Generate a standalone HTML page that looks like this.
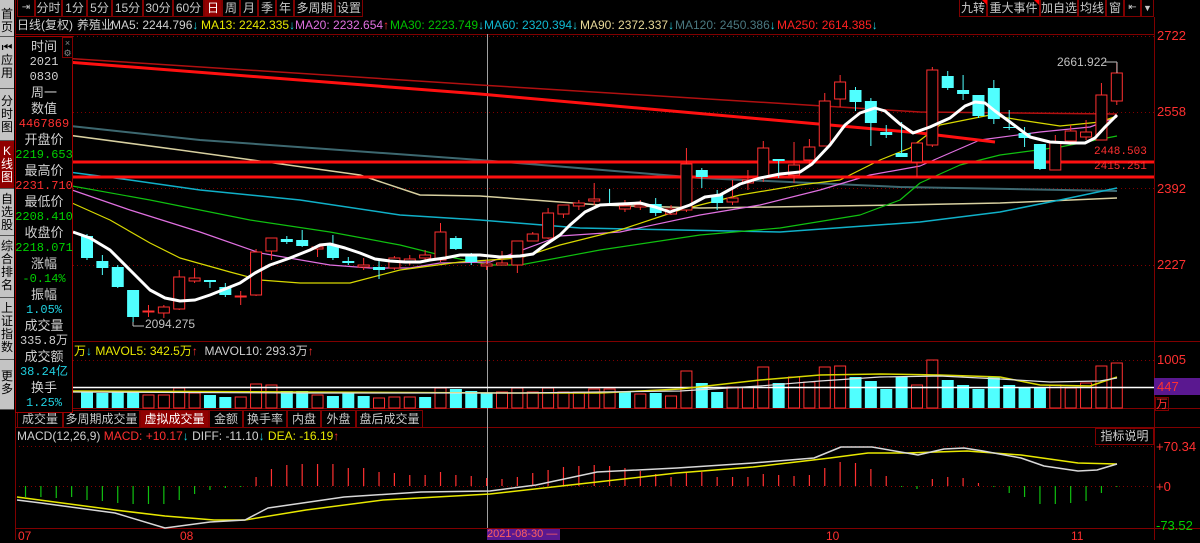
<!DOCTYPE html>
<html><head><meta charset="utf-8">
<style>
*{margin:0;padding:0;box-sizing:border-box}
body{width:1200px;height:540px;background:#000;overflow:hidden;position:relative;font-family:"Liberation Sans","Noto Sans CJK SC",sans-serif;font-size:12px;color:#c0c0c0}
.a{position:absolute;white-space:nowrap}
.btn{position:absolute;top:0;height:17px;border:1px solid #800000;border-top:none;line-height:16px;text-align:center;color:#c8c8c8;font-size:12px}
.side{position:absolute;left:0;width:14px;background:#c4c4c4;color:#000;font-size:12px;line-height:13px;text-align:center;border-bottom:1px solid #555}
.tab{position:absolute;top:410px;height:18px;border:1px solid #800000;line-height:16px;text-align:center;color:#c8c8c8;font-size:12px}
.ib{position:absolute;left:15px;width:58px;text-align:center;font-size:13px;line-height:15px}
.v{font-family:"Liberation Mono",monospace;font-size:12px}
.r{color:#ff3030}.g{color:#00d000}.c{color:#20d0e0}.w{color:#d0d0d0}.y{color:#e8e800}
.ma{position:absolute;top:18px;line-height:15px;font-size:12px;white-space:nowrap}
</style></head><body>
<svg id="s" width="1200" height="540" style="position:absolute;left:0;top:0"></svg>

<div class="side" style="top:0;height:37px;padding-top:8px">首<br>页</div>
<div class="side" style="top:37px;height:52px;padding-top:4px">⏮<br>应<br>用</div>
<div class="side" style="top:89px;height:52px;padding-top:6px">分<br>时<br>图</div>
<div class="side" style="top:141px;height:48px;padding-top:4px;background:#900000;color:#fff">K<br>线<br>图</div>
<div class="side" style="top:189px;height:47px;padding-top:4px">自<br>选<br>股</div>
<div class="side" style="top:236px;height:62px;padding-top:4px">综<br>合<br>排<br>名</div>
<div class="side" style="top:298px;height:62px;padding-top:4px">上<br>证<br>指<br>数</div>
<div class="side" style="top:360px;height:50px;padding-top:10px">更<br>多</div>

<div class="btn" style="left:17px;width:18px;font-size:10px">⇥</div>
<div class="btn" style="left:35px;width:27px">分时</div>
<div class="btn" style="left:62px;width:25px">1分</div>
<div class="btn" style="left:87px;width:25px">5分</div>
<div class="btn" style="left:112px;width:31px">15分</div>
<div class="btn" style="left:143px;width:30px">30分</div>
<div class="btn" style="left:173px;width:31px">60分</div>
<div class="btn" style="left:204px;width:18px;background:#900000;color:#fff">日</div>
<div class="btn" style="left:222px;width:18px">周</div>
<div class="btn" style="left:240px;width:18px">月</div>
<div class="btn" style="left:258px;width:18px">季</div>
<div class="btn" style="left:276px;width:18px">年</div>
<div class="btn" style="left:294px;width:41px">多周期</div>
<div class="btn" style="left:335px;width:28px">设置</div>
<div class="btn" style="left:959px;width:28px">九转</div>
<div class="btn" style="left:987px;width:53px">重大事件</div>
<div class="btn" style="left:1040px;width:38px">加自选</div>
<div class="btn" style="left:1078px;width:28px">均线</div>
<div class="btn" style="left:1106px;width:18px">窗</div>
<div class="btn" style="left:1124px;width:17px;font-size:10px">⇤</div>
<div class="btn" style="left:1141px;width:13px;font-size:9px">▼</div>
<div class="a" style="left:982px;top:0;width:0;height:0;border-left:5px solid transparent;border-top:5px solid #f00"></div>
<div class="a" style="left:1034px;top:0;width:0;height:0;border-left:5px solid transparent;border-top:5px solid #f00"></div>

<div class="ma w" style="left:17px">日线(复权)</div>
<div class="ma w" style="left:77px">养殖业</div>
<div class="ma w" style="left:111px">MA5: 2244.796<span class="c">↓</span></div>
<div class="ma y" style="left:201px">MA13: 2242.335<span class="c">↓</span></div>
<div class="ma" style="left:295px;color:#e070e0">MA20: 2232.654<span class="r">↑</span></div>
<div class="ma" style="left:390px;color:#00c000">MA30: 2223.749<span class="c">↓</span></div>
<div class="ma" style="left:484px;color:#10b8d0">MA60: 2320.394<span class="c">↓</span></div>
<div class="ma" style="left:580px;color:#e8d898">MA90: 2372.337<span class="c">↓</span></div>
<div class="ma" style="left:675px;color:#4a7880">MA120: 2450.386<span class="c">↓</span></div>
<div class="ma" style="left:777px;color:#ff2020">MA250: 2614.385<span class="c">↓</span></div>

<div class="a r" style="left:1157px;top:28px;font-size:13px">2722</div>
<div class="a r" style="left:1157px;top:104px;font-size:13px">2558</div>
<div class="a r" style="left:1157px;top:181px;font-size:13px">2392</div>
<div class="a r" style="left:1157px;top:257px;font-size:13px">2227</div>
<div class="a r v" style="left:1094px;top:146px;font-size:11px">2448.503</div>
<div class="a r v" style="left:1094px;top:161px;font-size:11px">2415.251</div>
<div class="a w" style="left:1057px;top:55px;color:#c0c0c0">2661.922</div>
<div class="a w" style="left:145px;top:317px;color:#c0c0c0">2094.275</div>

<div class="a" style="left:74px;top:344px;line-height:14px"><span class="y">万</span><span class="c">↓</span> <span class="y">MAVOL5: 342.5万</span><span class="r">↑</span> &nbsp;<span class="w">MAVOL10: 293.3万</span><span class="r">↑</span></div>
<div class="a r" style="left:1157px;top:352px;font-size:13px">1005</div>
<div class="a" style="left:1154px;top:378px;width:46px;height:17px;background:#5a1890"></div>
<div class="a r" style="left:1157px;top:379px;font-size:13px">447</div>
<div class="a r" style="left:1155px;top:397px;font-size:12px;border:1px solid #800000;width:14px;height:14px;line-height:12px;text-align:center">万</div>

<div class="tab" style="left:17px;width:46px">成交量</div>
<div class="tab" style="left:63px;width:77px">多周期成交量</div>
<div class="tab" style="left:140px;width:69px;background:#900000;color:#fff">虚拟成交量</div>
<div class="tab" style="left:209px;width:34px">金额</div>
<div class="tab" style="left:243px;width:44px">换手率</div>
<div class="tab" style="left:287px;width:34px">内盘</div>
<div class="tab" style="left:321px;width:35px">外盘</div>
<div class="tab" style="left:356px;width:67px">盘后成交量</div>

<div class="a" style="left:17px;top:429px;line-height:14px"><span class="w">MACD(12,26,9)</span> <span class="r">MACD: +10.17</span><span class="c">↓</span> <span class="w">DIFF: -11.10</span><span class="c">↓</span> <span class="y">DEA: -16.19</span><span class="r">↑</span></div>
<div class="a w" style="left:1095px;top:428px;width:59px;height:17px;border:1px solid #800000;text-align:center;line-height:15px">指标说明</div>
<div class="a r" style="left:1156px;top:439px;font-size:13px">+70.34</div>
<div class="a r" style="left:1156px;top:479px;font-size:13px">+0</div>
<div class="a g" style="left:1156px;top:518px;font-size:13px">-73.52</div>

<div class="a r" style="left:18px;top:529px;font-size:12px">07</div>
<div class="a r" style="left:180px;top:529px;font-size:12px">08</div>
<div class="a r" style="left:826px;top:529px;font-size:12px">10</div>
<div class="a r" style="left:1071px;top:529px;font-size:12px">11</div>
<div class="a" style="left:487px;top:529px;width:73px;height:11px;background:#5a1890;color:#ff6060;font-size:11px;line-height:11px">2021-08-30 —</div>

<div class="a" style="left:15px;top:36px;width:58px;height:377px;border:1px solid #a00000;background:#000"></div>
<div class="a" style="left:62px;top:37px;width:11px;height:21px;border:1px solid #800000;font-size:9px;color:#888;text-align:center;line-height:10px">×<br>⚙</div>
<div class="ib w" style="top:39px">时间</div>
<div class="ib w v" style="top:55px">2021</div>
<div class="ib w v" style="top:70px">0830</div>
<div class="ib w" style="top:85px">周一</div>
<div class="ib w" style="top:101px">数值</div>
<div class="ib r v" style="top:117px">4467869</div>
<div class="ib w" style="top:132px">开盘价</div>
<div class="ib g v" style="top:148px">2219.653</div>
<div class="ib w" style="top:163px">最高价</div>
<div class="ib r v" style="top:179px">2231.710</div>
<div class="ib w" style="top:194px">最低价</div>
<div class="ib g v" style="top:210px">2208.410</div>
<div class="ib w" style="top:225px">收盘价</div>
<div class="ib g v" style="top:241px">2218.071</div>
<div class="ib w" style="top:256px">涨幅</div>
<div class="ib g v" style="top:272px">-0.14%</div>
<div class="ib w" style="top:287px">振幅</div>
<div class="ib c v" style="top:303px">1.05%</div>
<div class="ib w" style="top:318px">成交量</div>
<div class="ib w v" style="top:334px">335.8万</div>
<div class="ib w" style="top:349px">成交额</div>
<div class="ib c v" style="top:365px">38.24亿</div>
<div class="ib w" style="top:380px">换手</div>
<div class="ib c v" style="top:396px">1.25%</div>

<script>
var s=document.getElementById('s'),h='';
function L(x1,y1,x2,y2,c,w,d){h+='<line x1="'+x1+'" y1="'+y1+'" x2="'+x2+'" y2="'+y2+'" stroke="'+c+'" stroke-width="'+(w||1)+'"'+(d?' stroke-dasharray="'+d+'"':'')+'/>';}
function P(pts,c,w){h+='<polyline fill="none" stroke="'+c+'" stroke-width="'+(w||1)+'" stroke-linejoin="round" points="'+pts.map(function(p){return p.join(',')}).join(' ')+'"/>';}
L(15,34.5,1154,34.5,'#800000');
L(1154.5,17,1154.5,540,'#800000');
L(15,341.5,1200,341.5,'#800000');
L(15,408.5,1200,408.5,'#800000');
L(15,427.5,1200,427.5,'#800000');
L(15,528.5,1200,528.5,'#800000');
L(15.5,0,15.5,540,'#800000');
[36,112,188,265].forEach(function(y){L(73,y+.5,1154,y+.5,'#800000',1,'1,3');});
L(73,360.5,1154,360.5,'#800000',1,'1,3');
L(15,446.5,1154,446.5,'#800000',1,'1,3');
L(15,486.5,1154,486.5,'#800000',1,'1,3');
L(487.5,34,487.5,528,'#a0a0a0',1);
P([[15,120],[200,140],[480,160],[700,178],[900,187],[1117,191]],'#3d6870',2);
P([[15,128],[180,150],[360,175],[420,195],[480,196],[600,205],[700,208],[900,205],[1000,203],[1117,198]],'#d8d0a0',1.5);
P([[15,165],[130,180],[200,190],[300,200],[400,215],[480,220],[580,228],[780,232],[920,222],[1000,212],[1060,200],[1117,188]],'#10b0c8',1.5);
P([[15,172],[72,186],[150,200],[250,220],[330,232],[400,245],[440,255],[490,265],[520,265],[600,250],[700,235],[780,228],[860,215],[900,200],[920,183],[960,165],[1000,155],[1060,147],[1117,136]],'#10c010',1.2);
P([[15,175],[72,190],[130,210],[200,232],[260,253],[330,265],[370,268],[410,268],[440,263],[490,262],[560,236],[620,232],[700,215],[760,205],[820,190],[870,175],[920,166],[980,140],[1040,132],[1090,127],[1117,117]],'#e070e0',1.2);
P([[15,185],[72,203],[110,220],[150,243],[180,258],[230,272],[260,280],[300,283],[350,283],[400,270],[460,262],[520,258],[560,245],[620,230],[680,210],[740,195],[800,185],[840,180],[880,160],[910,148],[940,125],[990,115],[1020,120],[1060,126],[1100,122],[1117,116]],'#d8d800',1.2);
P([[15,55],[480,85],[920,112],[1117,114]],'#b01010',1.5);
P([[15,58],[480,94],[920,133],[995,142]],'#ff1010',3);
L(15,162,1154,162,'#ff1010',3);
L(15,177,1154,177,'#ff1010',3);
var C=[
['c',236,258,234,260],['c',261,268,255,275],['c',267,287,265,288],['c',290,317,290,322],['r',311,312,305,317],['r',307,313,305,318],['r',277,309,270,310],['r',278,281,268,283],['c',280,282,280,288],['c',287,295,283,297],
['r',296,297,291,305],['r',252,295,249,296],['r',238,251,238,260],['c',239,242,236,244],['c',240,246,230,247],['r',247,249,247,257],['c',245,258,235,260],['c',261,263,257,265],['r',265,267,258,270],['c',267,270,260,279],
['r',258,268,256,270],['r',259,261,255,265],['r',255,258,250,262],['r',232,260,223,262],['c',238,249,236,250],['c',255,262,253,265],['r',264,266,260,270],['r',263,265,251,265],['r',241,265,241,273],['r',234,241,232,241],
['r',213,238,208,239],['r',205,214,205,218],['r',203,206,200,210],['r',199,201,183,205],['c',204,205,189,206],['r',206,209,200,212],['r',205,207,200,210],['c',204,213,198,216],['r',209,214,205,215],['r',164,210,148,212],
['c',170,177,168,188],['c',195,203,190,210],['r',198,202,180,205],['r',180,183,170,190],['r',148,177,141,182],['c',159,161,159,178],['r',165,175,142,183],['r',147,160,139,165],['r',101,146,93,146],['r',82,99,75,107],
['c',90,102,87,111],['c',101,123,98,146],['c',132,135,125,138],['c',153,157,122,157],['r',143,162,143,177],['r',70,145,67,147],['c',76,88,71,90],['c',90,94,75,100],['c',95,116,95,118],['c',88,119,80,124],
['c',127,128,110,130],['c',133,138,127,147],['c',144,169,144,170],['r',142,170,135,170],['r',131,141,125,145],['r',132,137,120,140],['r',95,140,83,140],['r',73,101,63,105]];
var P0=87,D=15.37;
C.forEach(function(k,i){var x=P0+D*i,col=k[0]=='r'?'#ff3030':'#50ffff';
 L(x,k[3],x,k[4],col,1);
 var hh=Math.max(1,k[2]-k[1]);
 if(k[0]=='r')h+='<rect x="'+(x-5.5)+'" y="'+k[1]+'" width="11" height="'+hh+'" fill="#000" stroke="'+col+'" stroke-width="1"/>';
 else h+='<rect x="'+(x-6)+'" y="'+k[1]+'" width="12" height="'+hh+'" fill="'+col+'"/>';
});
P([[73,232],[90,238],[110,250],[130,270],[150,290],[165,298],[180,301],[195,300],[210,295],[225,289],[240,283],[255,273],[270,265],[290,258],[310,250],[320,245],[330,244],[345,248],[360,253],[375,259],[390,261],[405,262],[420,262],[430,260],[445,258],[460,255],[480,255],[500,257],[520,256],[533,254],[545,245],[560,235],[570,225],[585,212],[600,205],[620,204],[640,203],[655,207],[670,212],[690,205],[705,197],[720,195],[740,184],[760,178],[780,174],[800,172],[812,164],[830,145],[845,125],[860,113],[875,108],[885,111],[900,124],[913,133],[930,127],[950,118],[965,106],[975,102],[985,103],[995,111],[1010,122],[1030,137],[1050,142],[1070,143],[1085,143],[1095,138],[1105,127],[1117,115]],'#ffffff',3);
L(1105,62,1117,62,'#c0c0c0');L(1117,62,1117,73,'#c0c0c0');
L(133,322,133,326,'#c0c0c0');L(133,326,144,326,'#c0c0c0');
var V=[['c',391],['c',393],['c',391],['c',391],['r',395],['r',395],['r',388],['r',393],['c',395],['c',397],['r',397],['r',384],['r',385],['c',391],['c',391],['r',395],['c',396],['c',392],['c',396],['r',398],['r',397],['r',397],['c',397],['r',388],['c',389],['c',391],['c',393],['r',392],['r',388],['r',392],['r',388],['r',392],['r',392],['r',389],
['r',389],['c',392],['r',394],['c',393],['r',396],['r',371],['c',383],['c',392],['r',387],['r',387],['r',367],['c',383],['r',377],['r',382],['r',367],['r',366],['c',377],['c',381],['c',389],['c',377],['r',385],['r',360],['c',380],['c',385],['c',389],['c',377],['c',385],['c',387],['c',388],['r',385],['r',388],['r',383],['r',366],['r',363]];
V.forEach(function(k,i){var x=P0+D*i;
 if(k[0]=='r')h+='<rect x="'+(x-5.5)+'" y="'+k[1]+'" width="11" height="'+(408-k[1])+'" fill="none" stroke="#ff3030"/>';
 else h+='<rect x="'+(x-6)+'" y="'+k[1]+'" width="12" height="'+(408-k[1])+'" fill="#50ffff"/>';
});
L(73,387.5,1154,387.5,'#ffffff',1.5);
P([[73,391],[300,392],[520,393],[600,393],[680,389],[760,380],[820,375],[880,374],[940,375],[1000,377],[1040,385],[1090,386],[1117,377]],'#d8d800',1.5);
P([[73,392],[300,393],[520,393],[600,392],[680,391],[760,386],[820,381],[880,377],[940,376],[1000,379],[1050,382],[1100,381],[1117,378]],'#e0e0e0',1.2);
var M=[497,497,498,497,500,501,503,504,504,504,500,494,490,488,487,477,469,465,464,464,464,468,468,472,473,475,475,472,475,476,478,479,477,473,470,467,466,465,
466,468,471,474,477,473,472,477,477,477,474,475,476,475,468,462,463,469,476,487,489,479,477,478,483,487,493,497,504,504,503,501,493,487];
M.forEach(function(y,i){var x=P0+D*(i-4);if(x<17)return;var col=y>486?'#10c010':'#ff3030';L(x,486,x,y,col,1.2);});
P([[17,497],[115,510],[165,516],[214,520],[245,520],[306,510],[383,500],[490,494],[597,482],[677,473],[753,467],[830,458],[868,453],[906,453],[967,451],[1021,455],[1078,463],[1117,464]],'#e8e800',1.5);
P([[17,500],[41,503],[115,513],[165,528],[210,522],[245,520],[268,508],[344,497],[421,492],[490,491],[536,485],[597,472],[677,468],[753,463],[814,458],[841,447],[872,447],[918,455],[944,449],[964,448],[983,451],[1021,458],[1044,466],[1078,471],[1097,470],[1117,464]],'#d8d8d8',1.5);
s.innerHTML=h;
</script>
</body></html>
